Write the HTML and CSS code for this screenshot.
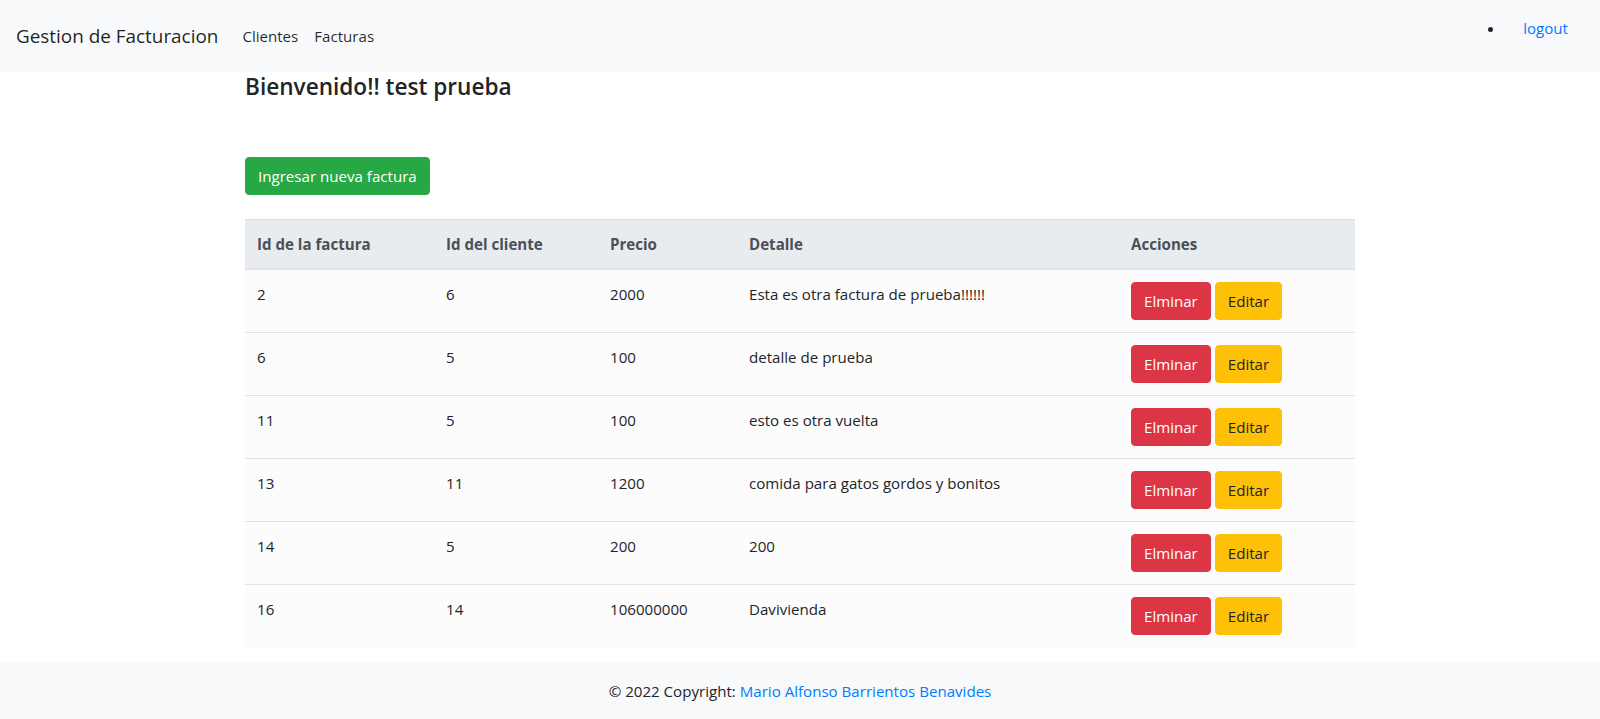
FILE: index.html
```html
<!DOCTYPE html>
<html lang="es">
<head>
<meta charset="utf-8">
<title>Gestion de Facturacion</title>
<link rel="stylesheet" href="styles.css">
</head>
<body>
<nav class="navbar">
  <a class="brand" href="#">Gestion de Facturacion</a>
  <div class="nav-links">
    <a class="nav-link" href="#">Clientes</a>
    <a class="nav-link" href="#">Facturas</a>
  </div>
  <ul class="user-list">
    <li><a class="logout" href="#">logout</a></li>
  </ul>
</nav>
<main class="container">
  <h4 class="welcome">Bienvenido!! test prueba</h4>
  <a class="btn btn-success" href="#">Ingresar nueva factura</a>
  <table class="table">
    <colgroup>
      <col class="c1"><col class="c2"><col class="c3"><col class="c4"><col class="c5">
    </colgroup>
    <thead>
      <tr><th>Id de la factura</th><th>Id del cliente</th><th>Precio</th><th>Detalle</th><th>Acciones</th></tr>
    </thead>
    <tbody>
      <tr><td>2</td><td>6</td><td>2000</td><td>Esta es otra factura de prueba!!!!!!</td><td><div class="actions"><a class="btn btn-danger" href="#">Elminar</a><a class="btn btn-warning" href="#">Editar</a></div></td></tr>
      <tr><td>6</td><td>5</td><td>100</td><td>detalle de prueba</td><td><div class="actions"><a class="btn btn-danger" href="#">Elminar</a><a class="btn btn-warning" href="#">Editar</a></div></td></tr>
      <tr><td>11</td><td>5</td><td>100</td><td>esto es otra vuelta</td><td><div class="actions"><a class="btn btn-danger" href="#">Elminar</a><a class="btn btn-warning" href="#">Editar</a></div></td></tr>
      <tr><td>13</td><td>11</td><td>1200</td><td>comida para gatos gordos y bonitos</td><td><div class="actions"><a class="btn btn-danger" href="#">Elminar</a><a class="btn btn-warning" href="#">Editar</a></div></td></tr>
      <tr><td>14</td><td>5</td><td>200</td><td>200</td><td><div class="actions"><a class="btn btn-danger" href="#">Elminar</a><a class="btn btn-warning" href="#">Editar</a></div></td></tr>
      <tr><td>16</td><td>14</td><td>106000000</td><td>Davivienda</td><td><div class="actions"><a class="btn btn-danger" href="#">Elminar</a><a class="btn btn-warning" href="#">Editar</a></div></td></tr>
    </tbody>
  </table>
</main>
<footer class="footer">
  © 2022 Copyright: <a class="footer-link" href="#">Mario Alfonso Barrientos Benavides</a>
</footer>
</body>
</html>
```
FILE: styles.css
```css
* { box-sizing: border-box; }
html, body { margin: 0; padding: 0; }
body {
  font-family: "Open Sans", "Noto Sans", "Liberation Sans", sans-serif;
  font-size: 15.1px;
  line-height: 24px;
  color: #212529;
  background: #fff;
}
a { text-decoration: none; }

.navbar {
  display: flex;
  align-items: center;
  height: 72px;
  padding: 8px 16px;
  background: #f8f9fa;
}
.brand {
  font-size: 18.9px;
  line-height: 30px;
  color: rgba(0, 0, 0, 0.88);
  margin-right: 16px;
}
.nav-links { display: flex; }
.nav-link {
  padding: 0 8px;
  color: rgba(0, 0, 0, 0.85);
}
.user-list {
  margin: 0 16px 16px auto;
  padding: 0;
  list-style: disc;
}
.user-list li { padding-left: 18px; }
.logout { color: #007bff; }

.container {
  width: 1110px;
  margin: 0 auto;
}
.welcome {
  margin: 0 0 56px;
  font-size: 22.6px;
  line-height: 29px;
  font-weight: 600;
  color: #212529;
}

.btn {
  display: inline-flex;
  align-items: center;
  justify-content: center;
  height: 38px;
  padding: 0 12px;
  border: 1px solid transparent;
  border-radius: 4px;
  font-size: 15.1px;
  line-height: 24px;
}
.btn-success { background: #28a745; border-color: #28a745; color: #fff; margin-bottom: 24px; }
.btn-danger { background: #dc3545; border-color: #dc3545; color: #fff; }
.btn-warning { background: #ffc107; border-color: #ffc107; color: #212529; }

.table {
  width: 1110px;
  table-layout: fixed;
  border-collapse: collapse;
  margin-bottom: 15px;
  background: #fcfcfc;
}
.c1 { width: 189px; }
.c2 { width: 164px; }
.c3 { width: 139px; }
.c4 { width: 382px; }
.c5 { width: 236px; }
.table th, .table td {
  padding: 12px;
  text-align: left;
  vertical-align: top;
  border-top: 1px solid #dee2e6;
}
.table th {
  background: #e9ecef;
  color: #495057;
  font-weight: 700;
  border-bottom: 2px solid #dee2e6;
}
.table td { height: 63px; }
.actions { display: flex; gap: 4px; }

.footer {
  height: 56px;
  padding: 16px;
  text-align: center;
  background: #f8f9fa;
}
.footer-link { color: #007bff; }
```
